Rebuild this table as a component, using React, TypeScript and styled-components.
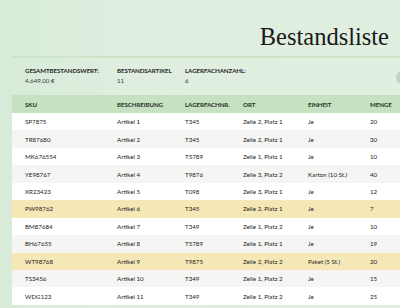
import styled, { createGlobalStyle } from "styled-components";

interface Item {
    sku: string;
    name: string;
    bin: string;
    place: string;
    unit: string;
    qty: number;
    low?: boolean;
}

const ITEMS: Item[] = [
    { sku: "SP7875", name: "Artikel 1", bin: "T345", place: "Zeile 2, Platz 1", unit: "Je", qty: 20 },
    { sku: "TR87680", name: "Artikel 2", bin: "T345", place: "Zeile 2, Platz 1", unit: "Je", qty: 30 },
    { sku: "MK676554", name: "Artikel 3", bin: "T5789", place: "Zeile 1, Platz 1", unit: "Je", qty: 10 },
    { sku: "YE98767", name: "Artikel 4", bin: "T9876", place: "Zeile 3, Platz 2", unit: "Karton (10 St.)", qty: 40 },
    { sku: "XR23423", name: "Artikel 5", bin: "T098", place: "Zeile 3, Platz 1", unit: "Je", qty: 12 },
    { sku: "PW98762", name: "Artikel 6", bin: "T345", place: "Zeile 2, Platz 1", unit: "Je", qty: 7, low: true },
    { sku: "BM87684", name: "Artikel 7", bin: "T349", place: "Zeile 1, Platz 2", unit: "Je", qty: 10 },
    { sku: "BH67655", name: "Artikel 8", bin: "T5789", place: "Zeile 1, Platz 1", unit: "Je", qty: 19 },
    { sku: "WT98768", name: "Artikel 9", bin: "T9875", place: "Zeile 2, Platz 2", unit: "Paket (5 St.)", qty: 20, low: true },
    { sku: "TS3456", name: "Artikel 10", bin: "T349", place: "Zeile 1, Platz 2", unit: "Je", qty: 15 },
    { sku: "WDG123", name: "Artikel 11", bin: "T349", place: "Zeile 1, Platz 2", unit: "Je", qty: 25 },
];

const COLS = [92, 68, 58, 65, 62, 60];

const GlobalStyle = createGlobalStyle`
    html, body {
        margin: 0;
        padding: 0;
        overflow: hidden;
    }
    body {
        width: 400px;
        height: 308px;
        background: linear-gradient(90deg, #d7ebd7 0%, #dfeedf 30%, #e1efe0 100%);
        font-family: "Lato", "Open Sans", sans-serif;
        color: #222;
    }
`;

const Page = styled.div`
    padding-left: 12px;
    width: 388px;
`;

const Header = styled.header`
    height: 58px;
    display: flex;
    align-items: flex-end;
    justify-content: flex-end;
    padding-right: 11px;
    border-bottom: 2px solid #cde4ca;
    box-sizing: border-box;
`;

const Title = styled.h1`
    margin: 0 0 7px;
    font-family: "Liberation Serif", "DejaVu Serif", serif;
    font-weight: 400;
    font-size: 24.5px;
    line-height: 1;
    color: #1a1a1a;
`;

const Summary = styled.div`
    display: flex;
    align-items: flex-start;
    height: 37px;
    padding-top: 9px;
    box-sizing: border-box;
`;

const Stat = styled.div<{ $width: number }>`
    width: ${(p) => p.$width}px;
    padding-left: 13px;
    box-sizing: border-box;
    display: flex;
    flex-direction: column;
    gap: 3px;
`;

const StatLabel = styled.span`
    font-size: 6.2px;
    font-weight: 700;
    text-transform: uppercase;
    letter-spacing: -0.1px;
    color: #262626;
    white-space: nowrap;
`;

const StatValue = styled.span`
    font-size: 6.2px;
    color: #3a3a3a;
`;

const Knob = styled.div`
    margin-left: auto;
    margin-right: -8px;
    margin-top: 4px;
    width: 12px;
    height: 13px;
    border-radius: 6px;
    background: #c6d2c5;
`;

const Table = styled.table`
    border-collapse: collapse;
    table-layout: fixed;
    width: ${COLS.reduce((a, b) => a + b, 0)}px;
    background: #fff;
`;

const HeadRow = styled.tr`
    height: 18px;
    background: #c6e0c2;
`;

const Th = styled.th`
    text-align: left;
    padding: 0 0 0 13px;
    font-size: 6.2px;
    font-weight: 700;
    text-transform: uppercase;
    letter-spacing: -0.1px;
    color: #24331f;
    white-space: nowrap;
`;

const Row = styled.tr<{ $low?: boolean; $alt?: boolean }>`
    height: 17.45px;
    background: ${(p) => (p.$low ? "#f6e7b6" : p.$alt ? "#f5f5f3" : "#ffffff")};
`;

const Td = styled.td`
    padding: 0 0 0 13px;
    font-size: 6.2px;
    font-weight: 400;
    color: #1c1c1c;
    white-space: nowrap;
`;

export default function App() {
    return (
        <>
            <GlobalStyle />
            <Page>
                <Header>
                    <Title>Bestandsliste</Title>
                </Header>
                <Summary>
                    <Stat $width={COLS[0]}>
                        <StatLabel>Gesamtbestandswert:</StatLabel>
                        <StatValue>4.649,00 €</StatValue>
                    </Stat>
                    <Stat $width={COLS[1]}>
                        <StatLabel>Bestandsartikel</StatLabel>
                        <StatValue>11</StatValue>
                    </Stat>
                    <Stat $width={120}>
                        <StatLabel>Lagerfachanzahl:</StatLabel>
                        <StatValue>6</StatValue>
                    </Stat>
                    <Knob />
                </Summary>
                <Table>
                    <colgroup>
                        {COLS.map((w, i) => (
                            <col key={i} style={{ width: w }} />
                        ))}
                    </colgroup>
                    <thead>
                        <HeadRow>
                            <Th>SKU</Th>
                            <Th>Beschreibung</Th>
                            <Th>Lagerfachnr.</Th>
                            <Th>Ort</Th>
                            <Th>Einheit</Th>
                            <Th>Menge</Th>
                        </HeadRow>
                    </thead>
                    <tbody>
                        {ITEMS.map((it, i) => (
                            <Row key={it.sku} $low={it.low} $alt={i % 2 === 1}>
                                <Td>{it.sku}</Td>
                                <Td>{it.name}</Td>
                                <Td>{it.bin}</Td>
                                <Td>{it.place}</Td>
                                <Td>{it.unit}</Td>
                                <Td>{it.qty}</Td>
                            </Row>
                        ))}
                    </tbody>
                </Table>
            </Page>
        </>
    );
}
